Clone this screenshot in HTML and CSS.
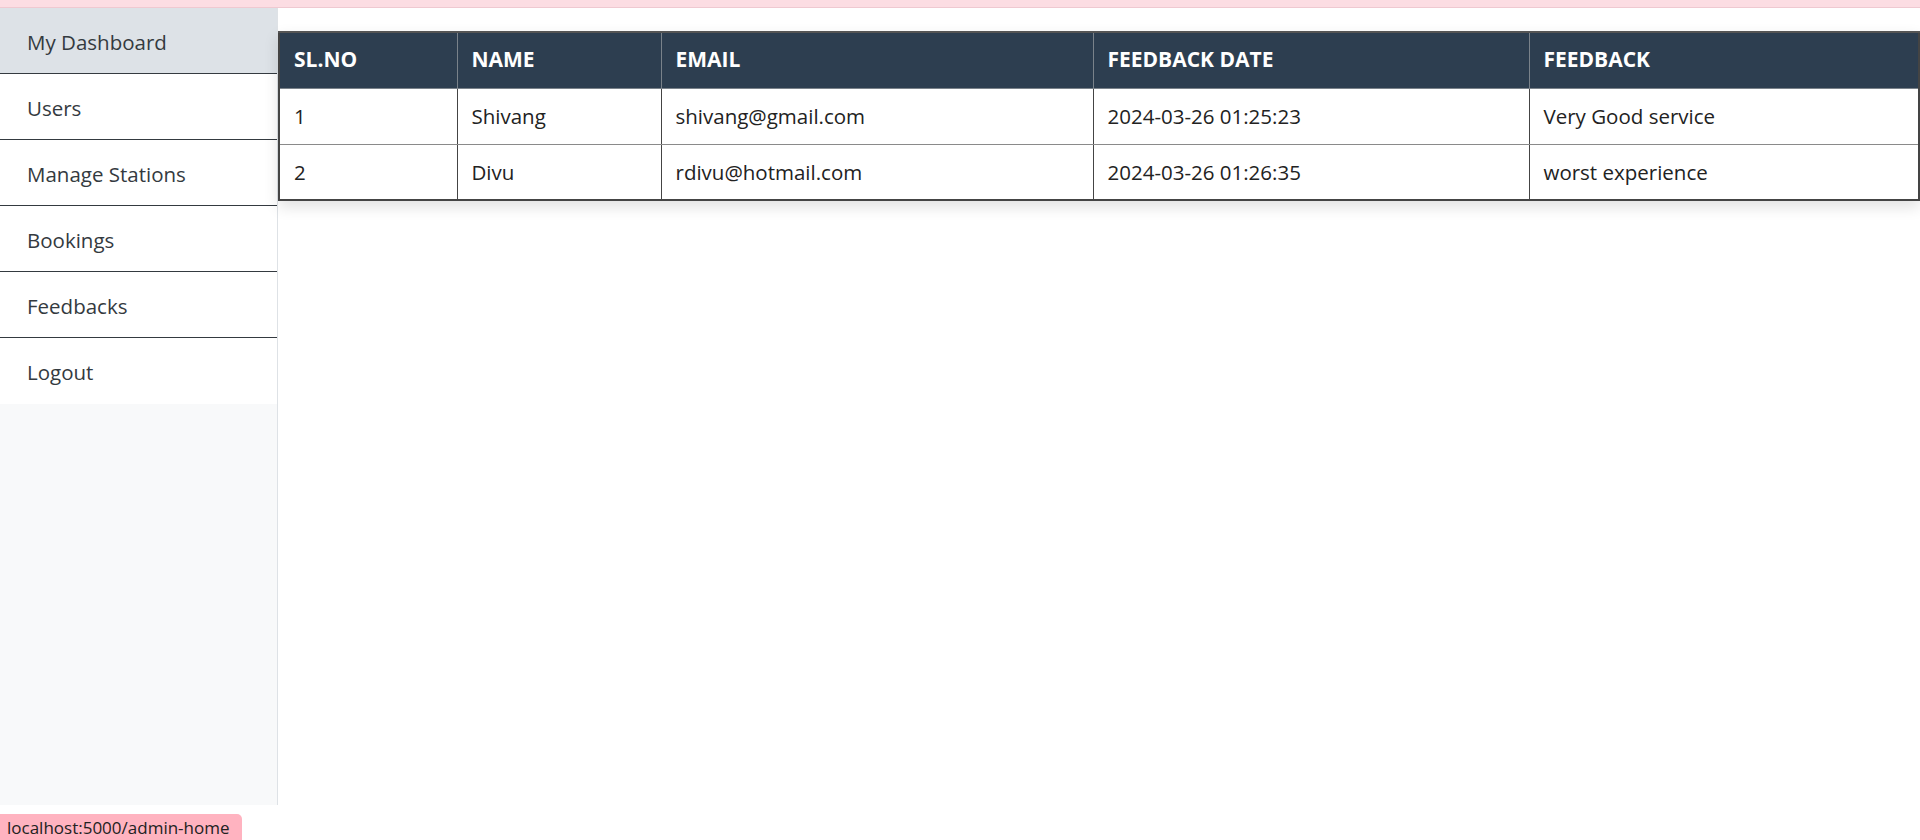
FILE: index.html
```html
<!DOCTYPE html>
<html>
<head>
<meta charset="utf-8">
<link rel="stylesheet" href="styles.css">
</head>
<body>
<div class="topbar"></div>
<div class="layout">
  <nav class="sidebar">
    <a class="nav-item active" href="#">My Dashboard</a>
    <a class="nav-item" href="#">Users</a>
    <a class="nav-item" href="#">Manage Stations</a>
    <a class="nav-item" href="#">Bookings</a>
    <a class="nav-item" href="#">Feedbacks</a>
    <a class="nav-item last" href="#">Logout</a>
  </nav>
  <main class="content">
    <table class="feedback-table">
      <colgroup>
        <col class="c-sl">
        <col class="c-name">
        <col class="c-email">
        <col class="c-date">
        <col class="c-fb">
      </colgroup>
      <thead>
        <tr>
          <th>SL.NO</th>
          <th>NAME</th>
          <th>EMAIL</th>
          <th>FEEDBACK DATE</th>
          <th>FEEDBACK</th>
        </tr>
      </thead>
      <tbody>
        <tr>
          <td>1</td>
          <td>Shivang</td>
          <td>shivang@gmail.com</td>
          <td>2024-03-26 01:25:23</td>
          <td>Very Good service</td>
        </tr>
        <tr>
          <td>2</td>
          <td>Divu</td>
          <td>rdivu@hotmail.com</td>
          <td>2024-03-26 01:26:35</td>
          <td>worst experience</td>
        </tr>
      </tbody>
    </table>
  </main>
</div>
<div class="status">localhost:5000/admin-home</div>
</body>
</html>
```
FILE: styles.css
```css
* { box-sizing: border-box; }
html, body {
  margin: 0;
  padding: 0;
  background: #fff;
  font-family: "Open Sans", "Noto Sans", sans-serif;
  height: 840px;
  overflow: hidden;
}
.topbar {
  height: 8px;
  background: #fcdde3;
  border-bottom: 1px solid #efc9d1;
}
.layout {
  display: flex;
  align-items: flex-start;
}
.sidebar {
  width: 278px;
  flex: none;
  height: 797px;
  background: #f8f9fa;
  border-right: 1px solid #dee2e6;
  display: flex;
  flex-direction: column;
}
.nav-item {
  display: block;
  height: 66px;
  padding: 20px 27px 0;
  background: #fff;
  color: #343a40;
  font-size: 20.5px;
  line-height: 28px;
  text-decoration: none;
  border-bottom: 1px solid #343a40;
}
.nav-item.active {
  background: #dde2e7;
}
.nav-item.last {
  border-bottom: none;
  height: 66px;
}
.content {
  flex: 1;
  padding: 23px 1px 0 0;
}
.feedback-table {
  width: 1641px;
  table-layout: fixed;
  border-collapse: collapse;
  border: 2px solid #444;
  box-shadow: 0 6px 14px rgba(0, 0, 0, 0.12);
  font-size: 20.5px;
  color: #222;
}
.c-sl { width: 178px; }
.c-name { width: 204px; }
.c-email { width: 432px; }
.c-date { width: 436px; }
.c-fb { width: 390px; }
.feedback-table th {
  background: #2d3e50;
  color: #fff;
  font-weight: 700;
  font-size: 21px;
  text-align: left;
  height: 56px;
  padding: 0 14px 2px;
  border: 1px solid #7a828a;
  border-top: 2px solid #555;
}
.feedback-table td {
  height: 56px;
  padding: 0 14px;
  border-left: 1px solid #444;
  border-right: 1px solid #444;
  border-top: 1px solid #8a8a8a;
  border-bottom: 1px solid #8a8a8a;
}
.feedback-table tbody tr:last-child td {
  border-bottom: 2px solid #444;
}
.status {
  position: fixed;
  left: 0;
  bottom: 0;
  height: 26px;
  width: 242px;
  padding: 3px 6px 0 7px;
  background: #ffb3c0;
  border-top-right-radius: 5px;
  font-family: "Open Sans", "Noto Sans", sans-serif;
  font-size: 17px;
  line-height: 22px;
  color: #222;
  white-space: nowrap;
}
```
